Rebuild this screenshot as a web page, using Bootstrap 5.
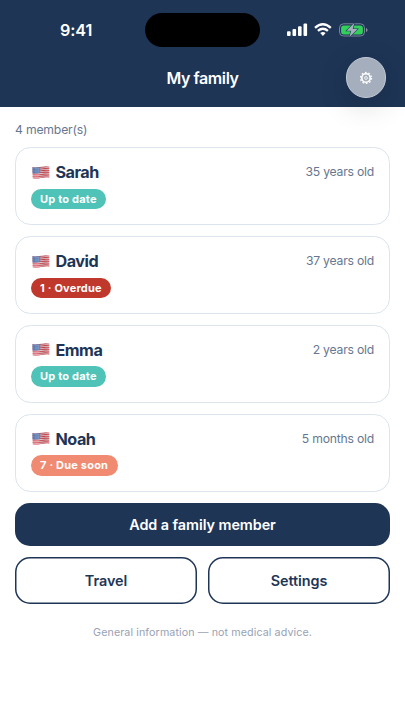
<!DOCTYPE html>
<html lang="en">
<head>
<meta charset="utf-8">
<meta name="viewport" content="width=device-width, initial-scale=1">
<title>My family</title>
<link href="https://cdn.jsdelivr.net/npm/bootstrap@5.3.0/dist/css/bootstrap.min.css" rel="stylesheet">
<style>
:root { --navy: #1e3556; --slate: #667791; --line: #dce4ee; }
body { font-family: Inter, "Liberation Sans", sans-serif; color: var(--navy); background: #fff; width: 405px; height: 720px; overflow: hidden; }
.app-header { background: var(--navy); height: 107px; }
.status-bar { height: 60px; padding: 0 36px 0 60px; }
.clock { font-size: 16.2px; font-weight: 600; letter-spacing: -.1px; width: 84.5px; line-height: 20px; }
.island { width: 115.5px; height: 34px; background: #000; }
.title { font-size: 16px; font-weight: 600; letter-spacing: -.4px; line-height: 20px; padding-top: 8px; }
.gear-btn { top: 57px; right: 19px; width: 40.5px; height: 40.5px; background: #a5aebc; border: 1px solid #c2cad5; box-shadow: 0 8px 30px rgba(0,0,0,.16); }
.content-area { padding: 13.5px 15px 0; }
.count { font-size: 12.2px; line-height: 18px; color: var(--slate); letter-spacing: -.18px; margin-bottom: 8.9px; }
.member { height: 77.8px; border: 1px solid var(--line); border-radius: 15.5px; padding: 14px 15px 0; margin-bottom: 11px; }
.member-name { font-size: 16.2px; font-weight: 700; line-height: 20px; letter-spacing: -.5px; gap: 5.5px; padding-left: 1px; }
.age { font-size: 12.2px; line-height: 20px; color: var(--slate); letter-spacing: -.22px; }
.pill { font-size: 11px; font-weight: 700; line-height: 20.5px; padding: 0 9.5px; margin: 6.5px 0 0 -.5px; letter-spacing: .2px; }
.pill-ok { background: #4fc3b7; }
.pill-late { background: #c0372b; }
.pill-soon { background: #f08a71; }
.action { font-size: 14.4px; font-weight: 600; border-radius: 15px; padding: 0; letter-spacing: -.06px; }
.action-main { height: 43.5px; background: var(--navy); color: #fff; }
.action-alt { height: 46.5px; border: 0; box-shadow: inset 0 0 0 1.5px var(--navy); color: var(--navy); }
.actions { gap: 11px; }
.note { font-size: 10.7px; line-height: 16px; color: #98a2b4; margin-top: 21.2px; letter-spacing: .1px; }
</style>
</head>
<body>
<svg width="0" height="0" class="position-absolute" aria-hidden="true">
  <defs>
    <linearGradient id="sheen" x1="0" x2="1"><stop offset="0" stop-color="#fff" stop-opacity=".05"/><stop offset=".35" stop-color="#fff" stop-opacity=".22"/><stop offset=".7" stop-color="#000" stop-opacity=".1"/><stop offset="1" stop-color="#fff" stop-opacity=".12"/></linearGradient>
    <symbol id="flag" viewBox="0 0 18 13">
      <clipPath id="wave"><path d="M.5 1.2Q5 1.7 9 .8T17.3.5V11.4Q13 11.1 9 12T.7 12.2Z"/></clipPath>
      <g clip-path="url(#wave)">
        <rect width="18" height="13" fill="#eedfe1"/>
        <path d="M0 1.5Q5 2 9 1.2T18 1M0 3.3Q5 3.8 9 3T18 2.8M0 5.1Q5 5.6 9 4.8T18 4.6M0 6.9Q5 7.4 9 6.6T18 6.4M0 8.7Q5 9.2 9 8.4T18 8.2M0 10.5Q5 11 9 10.2T18 10M0 12.2Q5 12.7 9 11.9T18 11.5" fill="none" stroke="#d2434e" stroke-width="1.05"/>
        <path d="M0 0H8.2V7Q4 7.8 0 7.4Z" fill="#4469a5"/>
        <path d="M1.6 2.6H8M1.6 4.2H8M1.6 5.8H8" stroke="#b4c5e2" stroke-width=".5" stroke-dasharray=".6 .9"/>
        <rect width="18" height="13" fill="url(#sheen)"/>
      </g>
    </symbol>
  </defs>
</svg>

<header class="app-header position-relative text-white">
  <div class="status-bar d-flex align-items-center">
    <div class="clock">9:41</div>
    <div class="island rounded-pill"></div>
    <svg class="ms-auto" width="82" height="16" viewBox="0 0 82 16" aria-label="Signal, Wi-Fi, battery charging">
      <g fill="#fff">
        <rect x="0" y="9.2" width="3.6" height="4.8" rx="1"/>
        <rect x="5.5" y="7" width="3.6" height="7" rx="1"/>
        <rect x="11" y="4.3" width="3.6" height="9.7" rx="1"/>
        <rect x="16.5" y="1.6" width="3.6" height="12.4" rx="1"/>
      </g>
      <g fill="none" stroke="#fff" stroke-width="2.4">
        <path d="M28 5.8Q35.9 -1.1 43.8 5.8"/>
        <path d="M30.9 8.9Q35.9 4.6 40.9 8.9"/>
      </g>
      <path d="M33.2 11.1Q35.9 9 38.6 11.1L35.9 14Z" fill="#fff"/>
      <rect x="52.5" y="1.8" width="25" height="12.2" rx="4" fill="none" stroke="#76839a"/>
      <path d="M79 6Q80.6 6.5 80.6 8T79 10Z" fill="#8793a5"/>
      <rect x="54.1" y="3.4" width="21.8" height="9" rx="2.7" fill="#32d05b"/>
      <path d="M67.4 .8L59.6 8.7H64.2L62.2 15.2L70.6 7H65.7Z" fill="#a5aebd" stroke="#1e3556" stroke-width="1.1" paint-order="stroke"/>
    </svg>
  </div>
  <div class="title text-center">My family</div>
  <button class="gear-btn position-absolute rounded-circle d-flex align-items-center justify-content-center p-0" aria-label="Preferences">
    <svg width="14" height="14" viewBox="-7 -8 14 14" fill="none" stroke="#fff">
      <circle r="4.2" stroke-width="1.6"/>
      <circle r="5.5" stroke-width="1.3" stroke-dasharray="1.7 1.756"/>
      <circle r="1.4" stroke-width=".8"/>
    </svg>
  </button>
</header>

<main class="content-area">
  <div class="count">4 member(s)</div>

  <div class="card member">
    <div class="d-flex justify-content-between">
      <div class="member-name d-flex align-items-center"><svg width="18" height="13"><use href="#flag"/></svg>Sarah</div>
      <div class="age">35 years old</div>
    </div>
    <span class="pill pill-ok rounded-pill text-white align-self-start">Up to date</span>
  </div>

  <div class="card member">
    <div class="d-flex justify-content-between">
      <div class="member-name d-flex align-items-center"><svg width="18" height="13"><use href="#flag"/></svg>David</div>
      <div class="age">37 years old</div>
    </div>
    <span class="pill pill-late rounded-pill text-white align-self-start">1 · Overdue</span>
  </div>

  <div class="card member">
    <div class="d-flex justify-content-between">
      <div class="member-name d-flex align-items-center"><svg width="18" height="13"><use href="#flag"/></svg>Emma</div>
      <div class="age">2 years old</div>
    </div>
    <span class="pill pill-ok rounded-pill text-white align-self-start">Up to date</span>
  </div>

  <div class="card member">
    <div class="d-flex justify-content-between">
      <div class="member-name d-flex align-items-center"><svg width="18" height="13"><use href="#flag"/></svg>Noah</div>
      <div class="age">5 months old</div>
    </div>
    <span class="pill pill-soon rounded-pill text-white align-self-start">7 · Due soon</span>
  </div>

  <div class="actions d-flex flex-column">
    <button class="btn action action-main w-100">Add a family member</button>
    <div class="actions d-flex">
      <button class="btn action action-alt flex-fill w-50">Travel</button>
      <button class="btn action action-alt flex-fill w-50">Settings</button>
    </div>
  </div>
  <div class="note text-center">General information — not medical advice.</div>
</main>
<script src="https://cdn.jsdelivr.net/npm/bootstrap@5.3.0/dist/js/bootstrap.bundle.min.js"></script>
</body>
</html>
